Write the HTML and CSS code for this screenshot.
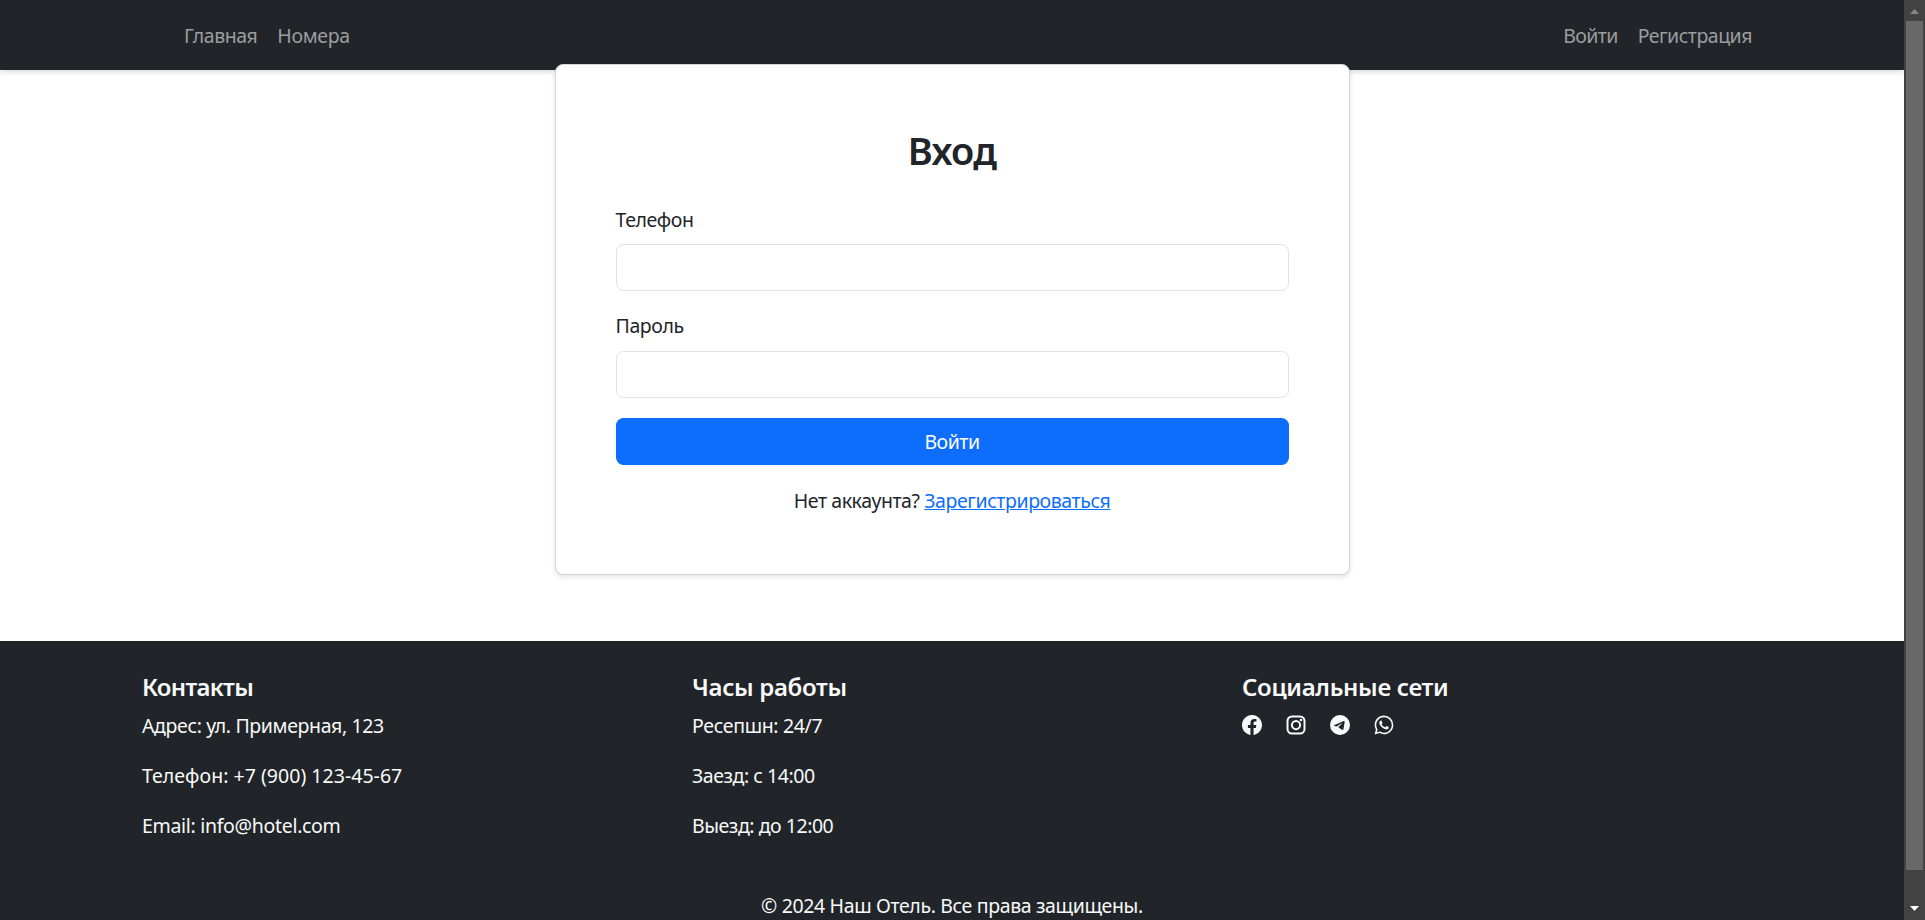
FILE: index.html
```html
<!DOCTYPE html>
<html lang="ru">
<head>
<meta charset="utf-8">
<title>Вход</title>
<link rel="stylesheet" href="styles.css">
</head>
<body>
<div class="page">
  <nav class="navbar">
    <div class="nav-group"><a class="nav-link home">Главная</a><a class="nav-link rooms">Номера</a></div>
    <div class="nav-group"><a class="nav-link login">Войти</a><a class="nav-link register">Регистрация</a></div>
  </nav>
  <main class="main">
    <form class="card">
      <h2 class="title">Вход</h2>
      <label class="label" for="phone">Телефон</label>
      <input class="input" id="phone" type="text">
      <label class="label" for="pass">Пароль</label>
      <input class="input" id="pass" type="password">
      <button class="submit" type="button">Войти</button>
      <p class="hint">Нет аккаунта? <a class="hint-link">Зарегистрироваться</a></p>
    </form>
  </main>
  <footer class="footer">
    <div class="columns">
      <section class="column">
        <h5 class="heading h-contacts">Контакты</h5>
        <p class="line address">Адрес: ул. Примерная, 123</p>
        <p class="line tel">Телефон: +7 (900) 123-45-67</p>
        <p class="line email">Email: info@hotel.com</p>
      </section>
      <section class="column">
        <h5 class="heading">Часы работы</h5>
        <p class="line desk">Ресепшн: 24/7</p>
        <p class="line checkin">Заезд: с 14:00</p>
        <p class="line checkin">Выезд: до 12:00</p>
      </section>
      <section class="column">
        <h5 class="heading">Социальные сети</h5>
        <div class="social">
          <svg class="icon" viewBox="0 0 16 16"><path d="M16 8.049c0-4.446-3.582-8.05-8-8.05C3.58 0-.002 3.603-.002 8.05c0 4.017 2.926 7.347 6.75 7.951v-5.625h-2.03V8.05H6.75V6.275c0-2.017 1.195-3.131 3.022-3.131.876 0 1.791.157 1.791.157v1.98h-1.009c-.993 0-1.303.621-1.303 1.258v1.51h2.218l-.354 2.326H9.25V16c3.824-.604 6.75-3.934 6.75-7.951"/></svg>
          <svg class="icon" viewBox="0 0 16 16"><rect x="1.2" y="1.2" width="13.6" height="13.6" rx="3.6" fill="none" stroke="currentColor" stroke-width="1.6"/><circle cx="8" cy="8" r="3.3" fill="none" stroke="currentColor" stroke-width="1.6"/><circle cx="12" cy="4" r="1"/></svg>
          <svg class="icon" viewBox="0 0 16 16"><path d="M16 8A8 8 0 1 1 0 8a8 8 0 0 1 16 0M8.287 5.906q-1.168.486-4.666 2.01-.567.225-.595.442c-.03.243.275.339.69.47l.175.055c.408.133.958.288 1.243.294q.39.01.868-.32 3.269-2.206 3.374-2.23c.05-.012.12-.026.166.016s.042.12.037.141c-.03.129-1.227 1.241-1.846 1.817-.193.18-.33.307-.358.336a8 8 0 0 1-.188.186c-.38.366-.664.64.015 1.088.327.216.589.393.85.571.284.194.568.387.936.629q.14.092.27.187c.331.236.63.448.997.414.214-.02.435-.22.547-.82.265-1.417.786-4.486.906-5.751a1.4 1.4 0 0 0-.013-.315.34.34 0 0 0-.114-.217.53.53 0 0 0-.31-.093c-.3.005-.763.166-2.984 1.09"/></svg>
          <svg class="icon" viewBox="-0.5 -0.5 17 17"><path d="M13.601 2.326A7.85 7.85 0 0 0 7.994 0C3.627 0 .068 3.558.064 7.926c0 1.399.366 2.76 1.057 3.965L0 16l4.204-1.102a7.9 7.9 0 0 0 3.79.965h.004c4.368 0 7.926-3.558 7.93-7.93A7.9 7.9 0 0 0 13.6 2.326zM7.994 14.521a6.6 6.6 0 0 1-3.356-.92l-.24-.144-2.494.654.666-2.433-.156-.251a6.56 6.56 0 0 1-1.007-3.505c0-3.626 2.957-6.584 6.591-6.584a6.56 6.56 0 0 1 4.66 1.931 6.56 6.56 0 0 1 1.928 4.66c-.004 3.639-2.961 6.592-6.592 6.592m3.615-4.934c-.197-.099-1.17-.578-1.353-.646-.182-.065-.315-.099-.445.099-.133.197-.513.646-.627.775-.114.133-.232.148-.43.05-.197-.1-.836-.308-1.592-.985-.59-.525-.985-1.175-1.103-1.372-.114-.198-.011-.304.088-.403.087-.088.197-.232.296-.346.1-.114.133-.198.198-.33.065-.134.034-.248-.015-.347-.05-.099-.445-1.076-.612-1.47-.16-.389-.323-.335-.445-.34-.114-.007-.247-.007-.38-.007a.73.73 0 0 0-.529.247c-.182.198-.691.677-.691 1.654s.71 1.916.81 2.049c.098.133 1.394 2.132 3.383 2.992.47.205.84.326 1.129.418.475.152.904.129 1.246.08.38-.058 1.171-.48 1.338-.943.164-.464.164-.86.114-.943-.049-.084-.182-.133-.38-.232"/></svg>
        </div>
      </section>
    </div>
    <p class="copyright">© 2024 Наш Отель. Все права защищены.</p>
  </footer>
</div>
<aside class="scrollbar"><i class="arrow up"></i><i class="thumb"></i><i class="arrow down"></i></aside>
</body>
</html>
```
FILE: styles.css
```css
* { box-sizing: border-box; }
body {
  margin: 0;
  height: 920px;
  display: flex;
  overflow: hidden;
  background: #fff;
  color: #212529;
  font: 400 19.5px/30px "Noto Sans", "Open Sans", sans-serif;
  letter-spacing: -.41px;
}
h2, h5, p { margin: 0; }
.page { width: 1904px; height: 920px; overflow: hidden; }
.navbar {
  height: 70px;
  padding: 2px 142px 0 174px;
  display: flex;
  justify-content: space-between;
  align-items: center;
  background: #212529;
  box-shadow: 0 2px 5px rgba(0, 0, 0, .15);
}
.nav-group { display: flex; }
.nav-link { padding: 0 10px; color: #9b9d9f; }
.home, .register { letter-spacing: -.49px; }
.rooms { letter-spacing: -.33px; }
.login { letter-spacing: -.6px; }
.main { height: 571px; display: flex; justify-content: center; align-items: flex-start; }
.card {
  width: 795px;
  height: 511px;
  margin-top: -5.6px;
  padding: 61px 60px 0;
  position: relative;
  display: flex;
  flex-direction: column;
  background: #fff;
  border: 1px solid #d3d4d4;
  border-radius: 8px;
  box-shadow: 0 2px 5px rgba(0, 0, 0, .12);
}
.title { height: 48px; margin-bottom: 30.4px; font-size: 38px; font-weight: 600; line-height: 49px; letter-spacing: -.7px; text-align: center; }
.label { height: 30px; margin-bottom: 9.4px; }
.input { height: 47px; flex: none; margin-bottom: 20.2px; border: 1px solid #dee2e6; border-radius: 7.5px; background: #fff; }
.submit { height: 47px; flex: none; padding: 2px 0 0; border: 0; border-radius: 7.5px; background: #0d6efd; color: #fff; font: inherit; letter-spacing: -.48px; }
.hint { margin-top: 21.2px; text-align: center; }
.hint-link { color: #0d6efd; text-decoration: underline; }
.footer { height: 279px; padding: 31px 127px 0; background: #212529; color: #f8f9fa; }
.columns { display: grid; grid-template-columns: repeat(3, 550px); height: 219px; }
.column { padding: 0 15px; }
.heading { height: 30px; margin-bottom: 9px; font-size: 24px; line-height: 29px; font-weight: 600; letter-spacing: -.33px; }
.h-contacts { letter-spacing: -.7px; }
.line { margin-bottom: 20px; }
.address { letter-spacing: -.37px; }
.tel { letter-spacing: .03px; }
.email { letter-spacing: -.31px; }
.desk { letter-spacing: -.34px; }
.checkin { letter-spacing: -.46px; }
.social { display: flex; gap: 24px; padding-top: 4px; }
.icon { width: 20px; height: 20px; fill: currentColor; }
.copyright { letter-spacing: -.36px; text-align: center; }
.scrollbar { width: 21px; height: 920px; padding: 9px 2px 8px; display: flex; flex-direction: column; align-items: center; background: #424242; }
.thumb { width: 17px; height: 849px; margin: 7px 0 36px; background: #686868; }
.arrow { width: 9px; height: 5px; background: #868686; }
.up { clip-path: polygon(50% 0, 100% 100%, 0 100%); }
.down { background: #fff; clip-path: polygon(0 0, 100% 0, 50% 100%); }
```
